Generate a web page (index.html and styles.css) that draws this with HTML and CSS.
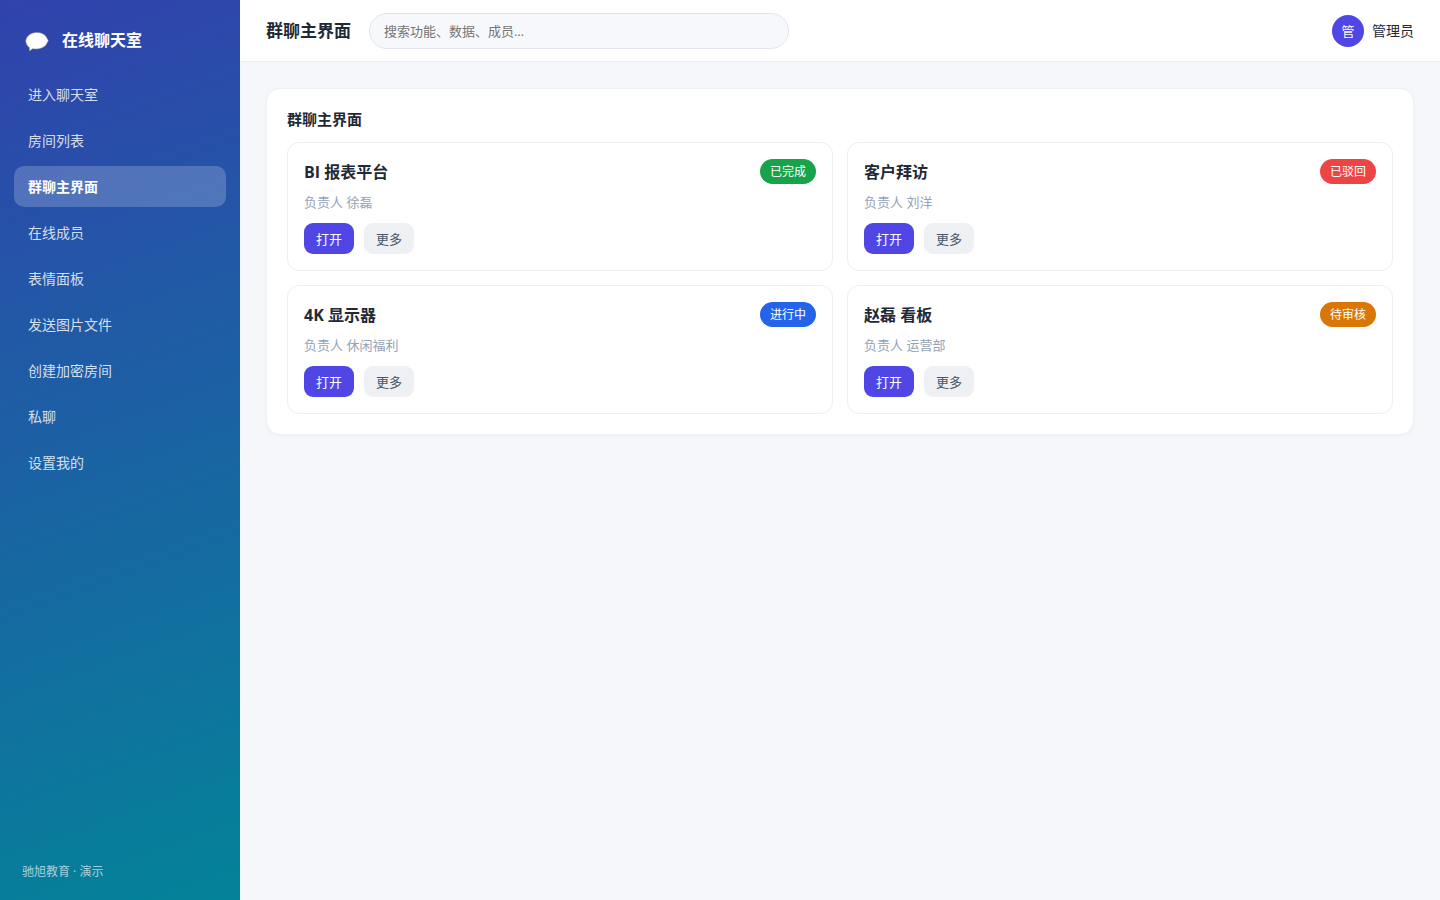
FILE: index.html
```html
<!DOCTYPE html>
<html lang="zh-CN">
<head>
  <meta charset="UTF-8" />
  <meta name="viewport" content="width=device-width, initial-scale=1" />
  <title>在线聊天室</title>
  <link rel="stylesheet" href="styles.css">
</head>
<body>
  <div class="app">
    <aside class="sidebar">
      <div class="brand">
        <svg class="logo" viewBox="0 0 26 26" aria-hidden="true">
          <path d="M12.500 5.500C17 5.500 20 7 22 9.500L24.300 13.500L22 18C19.500 20.500 16 22 12 22L8.500 21.800L5.500 24L5.400 20.500C3.500 19.500 2.500 17.500 1.700 14.500C2 9.500 6.500 5.500 12.500 5.500Z" />
        </svg>
        <span>在线聊天室</span>
      </div>
      <nav class="nav">
        <a href="#">进入聊天室</a>
        <a href="#">房间列表</a>
        <a href="#" class="active">群聊主界面</a>
        <a href="#">在线成员</a>
        <a href="#">表情面板</a>
        <a href="#">发送图片文件</a>
        <a href="#">创建加密房间</a>
        <a href="#">私聊</a>
        <a href="#">设置我的</a>
      </nav>
      <div class="side-foot">驰旭教育 · 演示</div>
    </aside>

    <div class="main">
      <header class="topbar">
        <h1>群聊主界面</h1>
        <input class="search" type="search" aria-label="搜索" placeholder="搜索功能、数据、成员…">
        <div class="user">
          <span class="avatar">管</span>
          <span>管理员</span>
        </div>
      </header>

      <main class="content">
        <section class="panel">
          <h2>群聊主界面</h2>
          <div class="cards">
            <article class="card">
              <div class="card-head">
                <h3>BI 报表平台</h3>
                <span class="badge done">已完成</span>
              </div>
              <p class="meta">负责人 徐磊</p>
              <div class="actions">
                <button class="btn primary">打开</button>
                <button class="btn">更多</button>
              </div>
            </article>
            <article class="card">
              <div class="card-head">
                <h3>客户拜访</h3>
                <span class="badge rejected">已驳回</span>
              </div>
              <p class="meta">负责人 刘洋</p>
              <div class="actions">
                <button class="btn primary">打开</button>
                <button class="btn">更多</button>
              </div>
            </article>
            <article class="card">
              <div class="card-head">
                <h3>4K 显示器</h3>
                <span class="badge running">进行中</span>
              </div>
              <p class="meta">负责人 休闲福利</p>
              <div class="actions">
                <button class="btn primary">打开</button>
                <button class="btn">更多</button>
              </div>
            </article>
            <article class="card">
              <div class="card-head">
                <h3>赵磊 看板</h3>
                <span class="badge pending">待审核</span>
              </div>
              <p class="meta">负责人 运营部</p>
              <div class="actions">
                <button class="btn primary">打开</button>
                <button class="btn">更多</button>
              </div>
            </article>
          </div>
        </section>
      </main>
    </div>
  </div>
</body>
</html>
```
FILE: styles.css
```css
* {
  box-sizing: border-box;
  margin: 0;
  padding: 0;
}
body {
  background: #f5f7fb;
  color: #1f2937;
  font-family: "Open Sans", "Noto Sans CJK SC", sans-serif;
  font-size: 14px;
  line-height: 20px;
}
button, input {
  font-family: inherit;
}
.app {
  display: flex;
  min-height: 100vh;
}
/* Sidebar */
.sidebar {
  width: 240px;
  flex-shrink: 0;
  display: flex;
  flex-direction: column;
  padding: 22px 14px 18px;
  background: linear-gradient(160deg, #3142ad, #048399);
  color: #fff;
}
.brand {
  display: flex;
  align-items: center;
  gap: 12px;
  height: 36px;
  margin-bottom: 16px;
  padding: 0 10px;
  font-size: 16px;
  font-weight: 700;
}
.logo {
  width: 26px;
  height: 26px;
  fill: #fff;
  stroke: rgba(150, 150, 140, 0.5);
  stroke-width: 1;
}
.nav {
  display: flex;
  flex-direction: column;
  gap: 5px;
}
.nav a {
  padding: 11px 14px 10px;
  border-radius: 10px;
  color: rgba(255, 255, 255, 0.82);
  text-decoration: none;
}
.nav a.active {
  background: rgba(255, 255, 255, 0.2);
  color: #fff;
  font-weight: 700;
}
.side-foot {
  margin-top: auto;
  padding: 0 8px;
  font-size: 12px;
  color: rgba(255, 255, 255, 0.65);
}
/* Top bar */
.main {
  flex: 1;
  min-width: 0;
}
.topbar {
  display: flex;
  align-items: center;
  gap: 18px;
  height: 62px;
  padding: 0 26px;
  background: #fff;
  border-bottom: 1px solid #eceef3;
}
.topbar h1 {
  font-size: 17px;
}
.search {
  width: 420px;
  height: 36px;
  padding: 0 14px;
  border: 1px solid #e2e5ee;
  border-radius: 18px;
  background: #f7f8fc;
  font-size: 13px;
  appearance: none;
}
.user {
  display: flex;
  align-items: center;
  gap: 8px;
  margin-left: auto;
}
.avatar {
  width: 32px;
  height: 32px;
  border-radius: 50%;
  background: #4f46e5;
  color: #fff;
  font-size: 13px;
  line-height: 32px;
  text-align: center;
}
/* Content */
.content {
  padding: 26px;
}
.panel {
  padding: 20px;
  border: 1px solid #eef0f5;
  border-radius: 14px;
  background: #fff;
  box-shadow: 0 1px 3px rgba(31, 41, 55, 0.04);
}
.panel h2 {
  margin-bottom: 13px;
  font-size: 15px;
}
.cards {
  display: grid;
  grid-template-columns: repeat(2, 1fr);
  gap: 14px;
}
.card {
  padding: 16px;
  border: 1px solid #eceef3;
  border-radius: 12px;
}
.card-head {
  display: flex;
  align-items: center;
  justify-content: space-between;
}
.card h3 {
  font-size: 16px;
}
.badge {
  padding: 0 10px;
  border-radius: 13px;
  color: #fff;
  font-size: 12px;
  line-height: 25px;
}
.done {
  background: #16a34a;
}
.rejected {
  background: #ef4444;
}
.running {
  background: #2563eb;
}
.pending {
  background: #d97706;
}
.meta {
  margin: 8px 0 11px;
  font-size: 13px;
  color: #94a3b8;
}
.actions {
  display: flex;
  gap: 10px;
}
.btn {
  height: 31px;
  padding: 0 12px;
  border: none;
  border-radius: 9px;
  background: #eef0f4;
  color: #475569;
  font-size: 13px;
  cursor: pointer;
}
.btn.primary {
  background: #4f46e5;
  color: #fff;
}
```
